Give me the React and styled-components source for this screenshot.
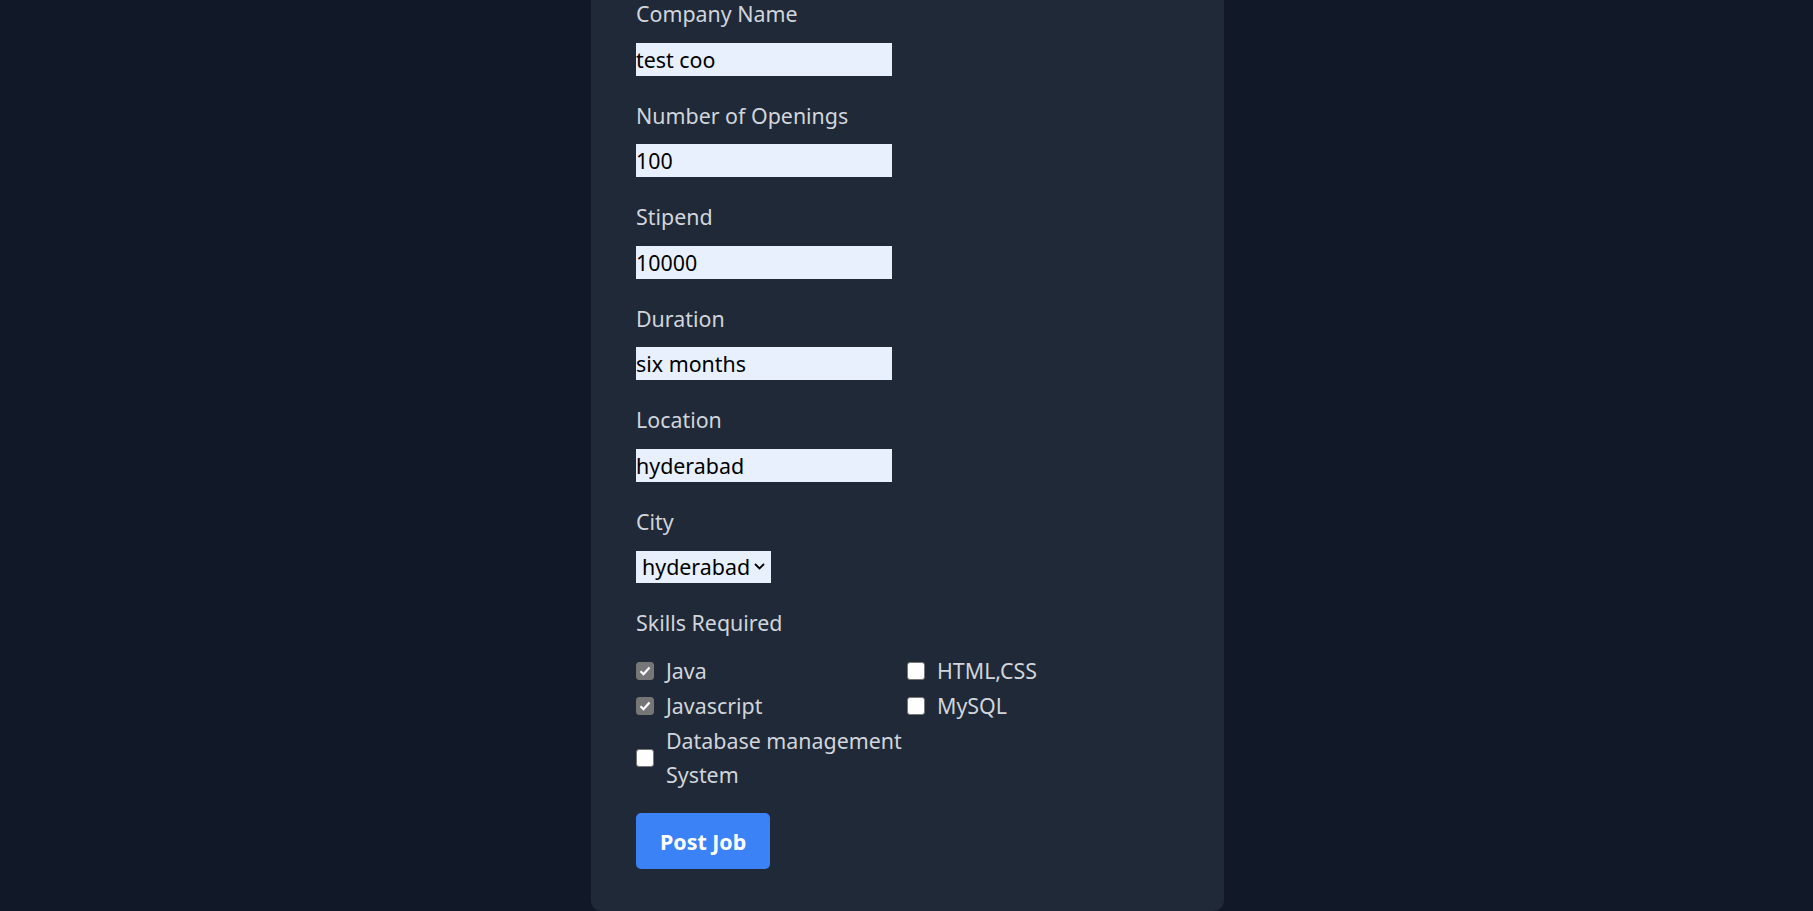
import React, { useState } from "react";
import styled, { createGlobalStyle } from "styled-components";

const GlobalStyle = createGlobalStyle`
  html, body {
    margin: 0;
    padding: 0;
    background: #111827;
    font-family: "Noto Sans", "Open Sans", sans-serif;
    overflow: hidden;
  }
`;

const Page = styled.div`
  min-height: 911px;
  display: flex;
  justify-content: center;
  padding-left: 2px;
  background: #111827;
`;

const Card = styled.form`
  width: 633px;
  box-sizing: border-box;
  margin-top: -40px;
  padding: 37px 45px 42px;
  background: #1f2937;
  border-radius: 10px;
  height: 951px;
`;

const Field = styled.div`
  margin-bottom: ${(p) => p.$gap || 23}px;
`;

const Label = styled.label`
  display: block;
  color: #d1d5db;
  font-size: 21.4px;
  line-height: 33.6px;
  margin-bottom: 12px;
`;

const Input = styled.input`
  display: block;
  width: 256px;
  height: 33px;
  box-sizing: border-box;
  border: none;
  padding: 0;
  margin: 0;
  background: #e8f0fe;
  color: #000;
  font-family: inherit;
  font-size: 21.4px;
  outline: none;
`;

const SelectWrap = styled.div`
  display: inline-flex;
  align-items: center;
  gap: 3px;
  height: 32px;
  box-sizing: border-box;
  padding: 0 6px 0 6px;
  background: #e8f0fe;
`;

const Select = styled.select`
  appearance: none;
  border: none;
  background: transparent;
  font-family: inherit;
  font-size: 21.4px;
  color: #000;
  padding: 0;
  outline: none;
`;

const SkillGrid = styled.div`
  display: grid;
  grid-template-columns: 271px 240px;
  row-gap: 1px;
  padding-top: 3px;
`;

const Skill = styled.label`
  display: flex;
  align-items: center;
  gap: 12px;
  color: #d1d5db;
  font-size: 21.4px;
  line-height: 34px;
  cursor: pointer;
`;

const Box = styled.span`
  flex: none;
  width: 18px;
  height: 18px;
  box-sizing: border-box;
  border-radius: 3px;
  display: flex;
  align-items: center;
  justify-content: center;
  background: ${(p) => (p.$checked ? "#767676" : "#fff")};
  border: 1px solid #767676;
`;

const Button = styled.button`
  height: 56px;
  padding: 0 24px;
  border: none;
  border-radius: 5px;
  background: #3b82f6;
  color: #fff;
  font-family: inherit;
  font-size: 21.4px;
  font-weight: 700;
  cursor: pointer;
`;

const fields = [
  ["Company Name", "test coo"],
  ["Number of Openings", "100"],
  ["Stipend", "10000"],
  ["Duration", "six months"],
  ["Location", "hyderabad"],
];

const skills = [
  "Java",
  "HTML,CSS",
  "Javascript",
  "MySQL",
  "Database management System",
];

const App = () => {
  const [checked, setChecked] = useState({ Java: true, Javascript: true });

  return (
    <>
      <GlobalStyle />
      <Page>
        <Card onSubmit={(e) => e.preventDefault()}>
          {fields.map(([label, value]) => (
            <Field key={label}>
              <Label>{label}</Label>
              <Input defaultValue={value} />
            </Field>
          ))}
          <Field>
            <Label>City</Label>
            <SelectWrap>
              <Select defaultValue="hyderabad">
                <option value="hyderabad">hyderabad</option>
                <option value="bangalore">bangalore</option>
                <option value="chennai">chennai</option>
              </Select>
              <svg width="11" height="7" viewBox="0 0 11 7">
                <path d="M1 1l4.5 4.5L10 1" fill="none" stroke="#000" strokeWidth="1.8" />
              </svg>
            </SelectWrap>
          </Field>
          <Field $gap={21}>
            <Label>Skills Required</Label>
            <SkillGrid>
              {skills.map((s) => (
                <Skill key={s} onClick={() => setChecked({ ...checked, [s]: !checked[s] })}>
                  <Box $checked={checked[s]}>
                    {checked[s] && (
                      <svg width="12" height="10" viewBox="0 0 12 10">
                        <path d="M1.5 5.2l3 3L10.5 1.5" fill="none" stroke="#fff" strokeWidth="2.2" />
                      </svg>
                    )}
                  </Box>
                  <span>{s}</span>
                </Skill>
              ))}
            </SkillGrid>
          </Field>
          <Button type="submit">Post Job</Button>
        </Card>
      </Page>
    </>
  );
};

export default App;
